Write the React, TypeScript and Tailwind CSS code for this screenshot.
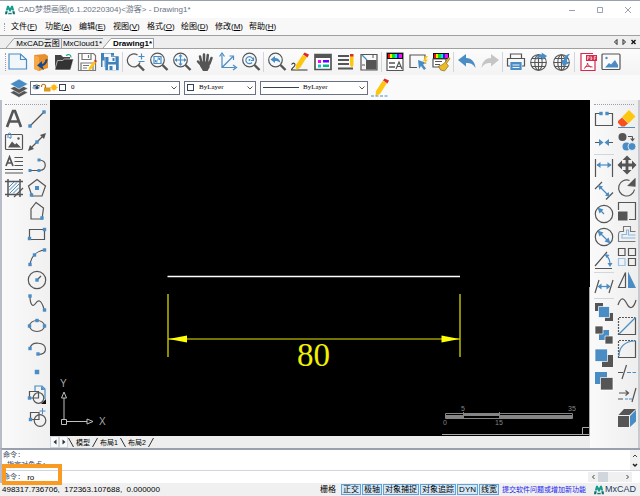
import type { ReactNode } from "react";

const G = "#555555";
const B = "#4a8cc4";

const Icon = ({ children }: { children: ReactNode }) => (
  <svg viewBox="0 0 20 20" className="size-5" fill="none" stroke={G} strokeWidth="1.2">
    {children}
  </svg>
);

const Tool = ({ name, children }: { name: string; children: ReactNode }) => (
  <button type="button" aria-label={name} className="flex size-[23px] shrink-0 items-center justify-center">
    <Icon>{children}</Icon>
  </button>
);

const VSep = () => <span className="mx-px h-5 w-px shrink-0 bg-gray-300" />;
const HSep = () => <span className="my-px h-px w-5 shrink-0 self-center bg-gray-300" />;

const Lens = ({ children }: { children?: ReactNode }) => (
  <>
    <circle cx="8.5" cy="8" r="6.8" fill="#f5f9fc" />
    <path d="M13.5 13l5 5" strokeWidth="2.4" />
    {children}
  </>
);

// small square grip, centred on x/y
const Dot = ({ x, y, s = 3.4 }: { x: number; y: number; s?: number }) => (
  <rect x={x - s / 2} y={y - s / 2} width={s} height={s} fill={B} stroke="none" />
);

const Pencil = () => (
  <g stroke="none">
    <path d="M12.5 3l4.5 2L10 16l-4.5 2 .5-5z" fill="#fdc711" />
    <path d="M13 2.500l1.500-2 4.500 2-1.500 3z" fill="#dc2a2a" />
  </g>
);

const Globe = () => (
  <g strokeWidth="1.1">
    <circle cx="9.5" cy="10.5" r="7.8" />
    <ellipse cx="9.5" cy="10.5" rx="3.7" ry="7.8" />
    <path d="M9.500 2.700v15.600M1.700 10.500h15.600M3 6.500h13M3 14.500h13" />
  </g>
);

const Palette = () => (
  <g stroke="none">
    <path d="M2 1h16v6H2z" fill="#111" />
    <path d="M3 2h2v4H3z" fill="#e11" />
    <path d="M5 2h2v4H5z" fill="#ee0" />
    <path d="M7 2h3v4H7z" fill="#1d1" />
    <path d="M10 2h2v4h-2z" fill="#1de" />
    <path d="M12 2h2v4h-2z" fill="#22e" />
    <path d="M14 2h3v4h-3z" fill="#e1e" />
  </g>
);

const Chevron = () => (
  <svg viewBox="0 0 8 6" className="pointer-events-none mr-px h-1.5 w-2 shrink-0" fill="none" stroke="#555">
    <path d="M1.500 1.500L4 4l2.500-2.500" />
  </svg>
);

const Swatch = () => <span className="size-[7px] shrink-0 border border-gray-700 bg-white" />;

const Logo = ({ className }: { className: string }) => (
  <svg viewBox="0 0 12 12" className={className} fill="#139b8b">
    <path d="M2.500 1h2L6 4l1.500-3h2L11 6.500H8.700L8.300 5 6.500 8h-1L3.700 5l-.4 1.500H1z" />
    <path d="M.5 7.500h2.800L2.500 11H0zM4.500 9l1.500 1 1.500-1 .8 2H3.700zM8.700 7.500h2.800L12 11H9.500z" fill="#0d6f72" />
  </svg>
);

const menus = [
  ["文件", "F"],
  ["功能", "A"],
  ["编辑", "E"],
  ["视图", "V"],
  ["格式", "O"],
  ["绘图", "D"],
  ["修改", "M"],
  ["帮助", "H"],
];

const modes = ["正交", "极轴", "对象捕捉", "对象追踪", "DYN", "线宽"];

const TitleBar = () => (
  <header className="flex h-[18px] items-center border-t border-gray-400 bg-white pr-2 pl-[5px]">
    <Logo className="size-[10px]" />
    <h1 className="ml-[3px] flex-1 text-[8px] leading-none whitespace-nowrap text-gray-500">
      CAD梦想画图(6.1.20220304)&lt;游客&gt; - Drawing1*
    </h1>
    <div className="flex items-center gap-5 text-gray-400">
      <button type="button" aria-label="最小化">
        <svg viewBox="0 0 8 8" className="size-2" stroke="currentColor"><path d="M1 4.500h6" /></svg>
      </button>
      <button type="button" aria-label="最大化">
        <svg viewBox="0 0 8 8" className="size-2" stroke="currentColor" fill="none"><path d="M1.500 1.500h5v5h-5z" /></svg>
      </button>
      <button type="button" aria-label="关闭">
        <svg viewBox="0 0 8 8" className="size-2" stroke="currentColor"><path d="M1 1l6 6M7 1L1 7" /></svg>
      </button>
    </div>
  </header>
);

const MenuBar = () => (
  <nav className="flex h-[17px] items-center bg-[#f8f8f8] pl-1 text-[8px] leading-none">
    <span className="mr-[6px] h-2 border-l border-dotted border-gray-400" />
    <div className="flex gap-[10px]">
      {menus.map(([label, key]) => (
        <button key={key} type="button" className="w-6 shrink-0 text-left whitespace-nowrap">
          {label}(<u>{key}</u>)
        </button>
      ))}
    </div>
  </nav>
);

const Slant = ({ fill }: { fill: string }) => (
  <svg viewBox="0 0 9 10" className="h-[10px] w-[9px] shrink-0" stroke="#9a9a9a">
    <path d="M0 10L8 .5h1V10z" fill={fill} stroke="none" />
    <path d="M0 10L8 .5h1" fill="none" />
  </svg>
);

const DocumentTabs = () => (
  <div className="flex h-[14px] items-end border-y border-[#a0a0a0] bg-[#eeeeee] pl-[6px] text-[8px] leading-none">
    <Slant fill="#f2f2f2" />
    <button type="button" className="h-[10px] w-[47px] border-t border-r border-gray-400 text-center leading-none whitespace-nowrap">MxCAD云图</button>
    <button type="button" className="h-[10px] w-[41px] border-t border-gray-400 text-center leading-none whitespace-nowrap">MxCloud1*</button>
    <Slant fill="#ffffff" />
    <button type="button" className="h-[10px] w-[42px] border-t border-r border-gray-400 bg-white text-center leading-none font-bold whitespace-nowrap">Drawing1*</button>
    <div className="ml-auto flex h-full items-center gap-1 pr-1">
      <button type="button" aria-label="上一个">
        <svg viewBox="0 0 5 6" className="h-[6px] w-[5px]" fill="none" stroke="#222"><path d="M4 .5v5L1.500 3z" /></svg>
      </button>
      <button type="button" aria-label="下一个">
        <svg viewBox="0 0 5 6" className="h-[6px] w-[5px]" fill="none" stroke="#222"><path d="M1 .5v5L3.500 3z" /></svg>
      </button>
      <button type="button" aria-label="关闭标签">
        <svg viewBox="0 0 5 6" className="h-[6px] w-[5px]" stroke="#111" strokeWidth="1.4"><path d="M.5 1l4 4M4.500 1l-4 4" /></svg>
      </button>
    </div>
  </div>
);

const MainToolbar = () => (
  <div className="flex h-[26px] items-center bg-linear-to-b from-[#fcfcfc] to-[#f3f3f3] pl-[5px]">
    <span className="h-[18px] border-l border-dotted border-gray-400" />
    <Tool name="新建">
      <path d="M1 2h11.500L18.500 7.500V17H1z" fill="#f1f6fb" stroke={B} />
      <path d="M12.500 2v5.500h6" stroke={B} />
    </Tool>
    <Tool name="打开云图">
      <path d="M3 3l11-1 3 2v12l-9 3-5-2z" fill="#e98f2c" stroke="none" />
      <path d="M3 3l5 2v14l-5-2z" fill="#f5a94b" stroke="none" />
      <path d="M16.500 7c0 4-2 6.500-5 7l1.500 4-7-4.500L11 9v3c2-.5 3-2 3.500-4.500z" fill="#164a8c" stroke="none" />
    </Tool>
    <Tool name="打开">
      <path d="M1 17V3h6l2 2h7v4" fill="#444" stroke="none" />
      <path d="M1 17L3.500 8.500h5l2-1.500H19.500l-3 11H1z" fill="#333" stroke="#fff" strokeWidth=".6" />
      <path d="M12 3.500c3-2 5-.5 5 2" stroke="#29a38b" />
    </Tool>
    <Tool name="另存为">
      <path d="M1.500 1.500h15l2 2v15h-17z" fill="#fff" stroke="#777" />
      <path d="M5 1.500v6h9v-6M4 18v-7h12v7" stroke="#777" />
      <path d="M6 13.500h6M6 16h4M11.500 3v3" stroke="#777" />
      <path d="M17 9l2 1.500-5 7-2.500 1 .5-3z" fill="#fdc711" stroke="none" />
      <path d="M17 9l1-1.500 2 1.500-1 1.500z" fill="#dc2a2a" stroke="none" />
    </Tool>
    <Tool name="全部保存">
      <path d="M1 1h13v14H1zM5 4h14v14.500H5z" fill="#3f81b8" stroke="none" />
      <path d="M4 1.500h7V5H4zM8.500 5h7v5h-7zM8 12.500h8V18H8zM2.500 8.500h2V15h-2z" fill="#f4f8fc" stroke="none" />
      <path d="M12.500 6h2v3h-2zM9.500 14h3v4h-3z" fill="#3f81b8" stroke="none" />
      <path d="M5 4h14v14.500H5z" stroke="#fff" strokeWidth=".5" />
    </Tool>
    <VSep />
    <Tool name="缩放">
      <path d="M11.500 3A6.500 6.500 0 1 0 14 10.500" />
      <path d="M12.500 13l5.500 5.500" strokeWidth="2.4" />
      <path d="M12.500 4.500h6M15.500 1.500v6M12.500 9.500h6" stroke={B} />
    </Tool>
    <Tool name="窗口缩放">
      <Lens>
        <path d="M5 4.500h7v7H5z" stroke={B} />
        <path d="M6.500 10l4-4M8.500 6h2v2M6.500 8v2h2" stroke={B} strokeWidth="1" />
      </Lens>
    </Tool>
    <Tool name="范围缩放">
      <Lens>
        <path d="M3.500 8h10M8.500 3v10" stroke={B} />
        <path d="M2.500 8L5 6v4zM14.500 8L12 6v4zM8.500 2l-2 2.500h4zM8.500 14l-2-2.500h4z" fill={B} stroke="none" />
      </Lens>
    </Tool>
    <Tool name="平移">
      <path d="M6.500 11L5 4.500M9 10V2.500M12 10.500l.8-7.500M14.500 11.500L16.500 6M7 14L3 9.500" strokeWidth="2.5" strokeLinecap="round" />
      <path d="M5.500 9.500h9.800l-.8 6-2 3.500H8L5 14z" fill={G} stroke="none" />
    </Tool>
    <Tool name="坐标系">
      <path d="M4 2.500v13h13M4 15.500L15 4.500" stroke={B} />
      <path d="M1.500 4.500L4 1l2.500 3.500M15 13l3.500 2.500L15 18M11.500 4h4v4" stroke={B} />
    </Tool>
    <Tool name="实时缩放">
      <Lens>
        <path d="M11.800 7.500A3.500 3.500 0 1 0 11 10.500M10 8.500h2.500V5.500" stroke={B} />
        <circle cx="8.5" cy="8" r="1" fill={B} stroke="none" />
      </Lens>
    </Tool>
    <VSep />
    <Tool name="上一个视图">
      <Lens>
        <path d="M3.500 7.500L8 4v2c3 0 5 1.500 5.500 5C12 9.500 10.500 9 8 9v2z" fill={B} stroke="none" />
      </Lens>
    </Tool>
    <Tool name="画笔">
      <path d="M1.500 12.500c2-2.500 4.500-1 3 1.500-1 1.500-3.500 3-3 4h16" stroke="#333" strokeWidth="1.1" />
      <Pencil />
    </Tool>
    <Tool name="特性">
      <path d="M2 2.500h16v15H2z" fill="#fff" strokeWidth="1.7" />
      <path d="M2 2h16v4H2z" fill={G} stroke="none" />
      <path d="M5 8h3v3H5z" fill="#f0f" stroke="none" />
      <path d="M10 8h6v2.500h-6z" fill="#60f" stroke="none" />
      <path d="M5 12.500h3v3H5z" fill="#0cc" stroke="none" />
      <path d="M10 12.500h6V15h-6z" fill="#0b8" stroke="none" />
    </Tool>
    <Tool name="图层">
      <path d="M2 4h11M2 8h11M2 12h11M2 16.500h15" strokeWidth="1.9" />
      <path d="M14 4h3.500v9L16 16l-2-3z" fill="#fdc711" stroke="none" />
      <path d="M14 2h3.500v2.500H14z" fill="#dc2a2a" stroke="none" />
    </Tool>
    <Tool name="块">
      <path d="M2 2.500h16V18H2z" />
      <path d="M7 8h10.500v9.500H7z" fill={G} stroke="none" />
      <path d="M3 3l5 5" stroke={B} />
      <path d="M14 3v3M3 13h3" strokeWidth="1" />
    </Tool>
    <VSep />
    <Tool name="文字样式">
      <path d="M2 1h16v17.500H2z" fill="#fff" />
      <Palette />
      <path d="M4 11h6M4 15h6" strokeWidth="1.6" />
      <path d="M11 17l3-7 3 7M12 14.500h4" />
    </Tool>
    <Tool name="快速选择">
      <path d="M9 15.500H2V3h15v6" />
      <path d="M10 8l9 3-4 1.500 3 4-2 1.500-3-4-2 3z" fill={B} stroke="none" />
      <path d="M17.500 4L15 9h2l-1.500 4L20 7.500h-2.500L20 4z" fill="#fdc711" stroke="none" />
    </Tool>
    <Tool name="格式刷">
      <Palette />
      <path d="M2 7h13v8H2z" fill="#fff" />
      <path d="M4 9.500h7M4 12.500h5" />
      <path d="M17.500 5.500l1.500 1-3.500 5 2 2.500-4 5-4-1-2-4 3-1 3-2z" fill="#edbb28" stroke="#755d12" strokeWidth=".6" />
    </Tool>
    <VSep />
    <Tool name="撤销">
      <path d="M1 8l8-6v4c6 0 9 4.500 9.500 10C16 12 14 11 9 11v3.500z" fill={B} stroke="none" />
    </Tool>
    <Tool name="重做">
      <path d="M19 8l-8-6v4C5 6 2 10.500 1.500 16 4 12 6 11 11 11v3.500z" fill="#c5c5c5" stroke="none" />
    </Tool>
    <VSep />
    <Tool name="打印">
      <path d="M4.500 6V2h11v4M4 14H1.500V6.500h17V14H16" />
      <path d="M5 10.500h10v7H5z" fill={B} stroke={B} />
      <path d="M6.500 13h7M6.500 15.500h7" stroke="#e8f3fc" strokeWidth="1" />
    </Tool>
    <Tool name="上传">
      <Globe />
      <path d="M7 8c.5-4 3-6 6-5.500L12.500.5 18 4l-4.500 4-.3-2.500C10.500 5 9 6 7 8z" fill={B} stroke="none" />
    </Tool>
    <Tool name="下载">
      <Globe />
      <path d="M18 2c-3 0-6 2.500-6 6l-3-.5 2 6.500 6.500-3-2.500-1.500C15 6 16 4 18 2z" fill={B} stroke="none" />
    </Tool>
    <VSep />
    <Tool name="导出 PDF">
      <path d="M17 9v9.500H3v-17h12" fill="#fff" stroke="#d42a4b" />
      <path d="M8 3h11v6H8z" fill="#d42a4b" stroke="none" />
      <path d="M9.500 8V4.500h1.500v1.700H9.500M13 4.500V8q2-1.700 0-3.500M16.300 8V4.500H18M16.300 6.200h1.500" stroke="#fff" strokeWidth=".6" />
      <path d="M6 16.500c2-1 3.500-3.500 3.500-5.500M9.500 11c.5 2.500 2 4 5 4M7 15c2-1 4-1 6 0" stroke="#d42a4b" strokeWidth="1" />
    </Tool>
    <Tool name="导出图片">
      <rect x="1" y="2" width="18" height="15.5" rx="1" fill="#fafafa" />
      <path d="M4 15.500L8 11l2 1.500L14 8l3 5v2.500z" fill={B} stroke="none" />
      <circle cx="5.5" cy="6" r="1.2" fill={B} stroke="none" />
    </Tool>
  </div>
);

const LayerToolbar = () => (
  <div className="flex h-[25px] items-center bg-[#fafafa] pl-[7px] font-['Liberation_Serif','Noto_Sans_CJK_SC',serif] text-[7px]">
    <Tool name="图层管理">
      <path d="M10 10l9 4.500-9 5-9-5z" fill="#555" stroke="#fff" strokeWidth=".6" />
      <path d="M10 6l9 4.500-9 5-9-5z" fill="#555" stroke="#fff" strokeWidth=".6" />
      <path d="M10 1l9 5-9 5-9-5z" fill={B} stroke="#fff" strokeWidth=".6" />
    </Tool>
    <label className="flex h-[14px] w-[150px] shrink-0 items-center gap-px border border-gray-500 bg-white pl-px">
      <svg viewBox="0 0 26 9" className="h-[9px] w-[26px] shrink-0">
        <path d="M0 5c2-3 5-3 8 0-3 2-5 2-8 0z" fill="#9db4c8" />
        <path d="M1 3q4-2 7 0" stroke="#345" fill="none" />
        <circle cx="5" cy="4.5" r="1.5" fill="#27445f" />
        <path d="M12 4.500h6.500v4H12z" fill="#d99a22" />
        <path d="M9.500 4V2.500q2-2.500 4 0V5" stroke="#b9791a" strokeWidth="1.2" fill="none" />
        <circle cx="22" cy="4.5" r="2.7" fill="#fdb813" />
        <path d="M22 .5v8M18 4.500h8M19.200 1.700l5.600 5.600M24.800 1.700l-5.600 5.600" stroke="#fdb813" strokeWidth=".7" />
      </svg>
      <Swatch />
      <select aria-label="图层" className="min-w-0 flex-1 appearance-none bg-transparent pl-1 leading-none">
        <option>0</option>
      </select>
      <Chevron />
    </label>
    <label className="ml-1 flex h-[14px] w-[72px] shrink-0 items-center border border-gray-500 bg-white pl-[2px]">
      <Swatch />
      <select aria-label="颜色" className="min-w-0 flex-1 appearance-none bg-transparent pl-[5px] leading-none">
        <option>ByLayer</option>
      </select>
      <Chevron />
    </label>
    <label className="ml-1 flex h-[14px] w-[108px] shrink-0 items-center border border-gray-500 bg-white pl-[2px]">
      <span className="h-px w-9 shrink-0 bg-gray-700" />
      <select aria-label="线型" className="min-w-0 flex-1 appearance-none bg-transparent pl-1 leading-none">
        <option>ByLayer</option>
      </select>
      <Chevron />
    </label>
    <Tool name="线型管理">
      <Pencil />
      <path d="M1 18h18" stroke={B} strokeDasharray="3 1.5" />
    </Tool>
  </div>
);

const DrawPanel = () => (
  <aside className="flex w-[50px] shrink-0 flex-col border-l-2 border-[#b9bcc9] bg-linear-to-r from-[#fafafa] to-[#f0f0f0] pt-1">
    <span className="mx-[3px] mb-[2px] border-t border-dotted border-gray-400" />
    <div className="flex">
      <div className="flex flex-col">
        <Tool name="文字">
          <path d="M3 18L9 2h2l6 16M6 12.500h8" strokeWidth="2.6" />
        </Tool>
        <Tool name="图像">
          <rect x="1.500" y="2.500" width="17" height="15" rx="1" />
          <path d="M4 15.500L8 9.500l3 3 1.500-1.500L17 15.500z" fill={G} stroke="none" />
          <circle cx="14.5" cy="6.5" r="1.2" fill={G} stroke="none" />
          <path d="M4 6V2q1.500-2 3 0v4q-1.500 1-1.500-1" stroke={B} strokeWidth="1" />
        </Tool>
        <Tool name="多行文字">
          <path d="M2 11L5.500 2 9 11M3.500 8h4" strokeWidth="1.7" />
          <path d="M10.500 2.500H19M10.500 6.500H19M10.500 10.500H19M1 14.500h18M1 18h18" />
        </Tool>
        <Tool name="填充">
          <path d="M4 1v18M16 1v18M1 3.500h18M1 16.500h18" strokeWidth="1.5" />
          <path d="M5 9l5-5M5 12.500L13 4.500M5.500 15.500L15 6M9 15.500l6-6" stroke={B} strokeWidth="1" />
          <path d="M10 19l9-9" />
        </Tool>
      </div>
      <div className="flex flex-col">
        <Tool name="直线"><path d="M3 17L17 3" /><Dot x={3} y={17} /><Dot x={17} y={3} /></Tool>
        <Tool name="构造线">
          <path d="M3 17L17 3" />
          <path d="M1 19l2-6 4 4zM19 1l-2 6-4-4z" fill={G} stroke="none" />
          <Dot x={10} y={10} />
        </Tool>
        <Tool name="多段线"><path d="M3 15.500h10c7-1 7-9.500 0-10.500" /><Dot x={3} y={15.5} s={3} /><Dot x={12} y={15.5} s={3} /><Dot x={12} y={5} s={3} /></Tool>
        <Tool name="正多边形"><path d="M10 1.500l8.500 6.500L15 18H5L1.500 8z" /><Dot x={10} y={10} s={4} /><Dot x={4.5} y={17} /></Tool>
        <Tool name="多边形"><path d="M9 1.500l7.500 5.500-1.500 11H4V8z" /><Dot x={15} y={17} /></Tool>
        <Tool name="矩形"><path d="M2.500 5.500h15v10h-15z" /><Dot x={2.5} y={14.5} /><Dot x={17.5} y={5.5} /></Tool>
        <Tool name="圆弧"><path d="M3 18C4 10 9 4 17.500 3" /><Dot x={3} y={17.5} /><Dot x={7.5} y={8} /><Dot x={17.5} y={3} /></Tool>
        <Tool name="圆"><circle cx="10" cy="10" r="8.7" /><path d="M10 10l4-4" /><Dot x={10} y={10} /></Tool>
        <Tool name="样条"><path d="M3 3C3 12 6 14.500 8.500 10.500S14 6 17 16" /><Dot x={3} y={3} /><Dot x={17.5} y={17} /></Tool>
        <Tool name="椭圆"><ellipse cx="10" cy="10" rx="7.5" ry="5.5" /><Dot x={2.5} y={10} /><Dot x={17.5} y={10} /><Dot x={10} y={4.5} /></Tool>
        <Tool name="椭圆弧"><path d="M3 9c2-7 15-6 15.500 1 0 4-3 5.500-7.500 5.500" /><Dot x={3} y={9.5} /><Dot x={11} y={15} /></Tool>
        <Tool name="点"><Dot x={10} y={10} s={4.5} /></Tool>
        <Tool name="插入块">
          <path d="M8 6V1h7l3 3v10" stroke={B} />
          <path d="M14 1v4h4z" fill={B} stroke="none" />
          <path d="M2.500 6.500h9v6.500h-9z" /><circle cx="11.5" cy="13" r="5.3" />
          <Dot x={2.5} y={13} /><path d="M19 14v5h-5z" fill="#111" stroke="none" />
        </Tool>
        <Tool name="创建块">
          <path d="M3.500 4.500H12v7H3.500z" /><circle cx="13" cy="12.5" r="5.8" />
          <path d="M12.500 3h6M15.500 0v6" stroke={B} strokeWidth="1" /><Dot x={3.5} y={11.5} />
        </Tool>
      </div>
    </div>
  </aside>
);

const EditPanel = () => (
  <aside className="flex w-[50px] shrink-0 flex-col border-r-2 border-[#c9c9ce] bg-linear-to-r from-[#fafafa] to-[#eeeeee] pt-1">
    <span className="mx-1 mb-[2px] border-t border-dotted border-gray-400" />
    <div className="flex pl-[2px]">
      <div className="flex flex-col">
        <Tool name="打断"><path d="M6 4.500H1.500v12h17v-12H14" /><Dot x={7} y={4.5} /><Dot x={13} y={4.5} /></Tool>
        <Tool name="合并"><path d="M1 10.500h7M19 10.500h-7" /><path d="M5 7l4.500 3.500L5 14zM15 7l-4.500 3.500L15 14z" fill={B} stroke="none" /></Tool>
        <HSep />
        <Tool name="线性标注">
          <path d="M1.500 1v18M18.500 1v18" /><path d="M3 7h14" stroke={B} />
          <path d="M2.500 7l4-3v6zM17.500 7l-4-3v6z" fill={B} stroke="none" />
        </Tool>
        <Tool name="对齐标注">
          <path d="M1 8l7-7M12 18.500l7-7" /><path d="M5 5l10 10" stroke={B} />
          <path d="M4 4l5 1.500L5.500 9zM16 16l-5-1.500 3.500-3.500z" fill={B} stroke="none" />
        </Tool>
        <Tool name="半径标注"><circle cx="10" cy="10" r="8.7" /><path d="M10 10L6 6" stroke={B} /><path d="M3.500 3.500l6 2-4 4z" fill={B} stroke="none" /></Tool>
        <Tool name="直径标注">
          <circle cx="10" cy="10" r="8.7" /><path d="M5 5l10 10" stroke={B} />
          <path d="M3.500 3.500l6 2-4 4zM16.500 16.500l-6-2 4-4z" fill={B} stroke="none" />
        </Tool>
        <Tool name="角度标注">
          <path d="M1 16L13 2M1 18.500h17" /><path d="M12 5c3 3 4 6 4 9" stroke={B} />
          <path d="M10.500 4l5 1-3 3zM16 17l-2.500-4h5z" fill={B} stroke="none" />
        </Tool>
        <HSep />
        <Tool name="倾斜标注">
          <path d="M1 17L5 4M15 17l4-13" /><path d="M5 10.500h11" stroke={B} />
          <path d="M3.500 10.500l4-3v6zM16.500 10.500l-4-3v6z" fill={B} stroke="none" />
        </Tool>
        <HSep />
        <Tool name="前置">
          <g stroke="none"><path d="M1 1h8v8H1zM11 11h8v8h-8z" fill={G} /><path d="M4.500 4.500h11v11h-11z" fill={B} stroke="#fff" strokeWidth=".7" /></g>
        </Tool>
        <Tool name="后置">
          <g stroke="none"><path d="M5 5h10v10H5z" fill={B} /><path d="M1 1h8v8H1zM11 11h8v8h-8z" fill={G} stroke="#fff" strokeWidth=".7" /></g>
        </Tool>
        <Tool name="置于对象之上">
          <g stroke="none"><path d="M8 7h11v12H8z" fill={G} /><path d="M1 1h12.500v12.500H1z" fill={B} stroke="#fff" strokeWidth=".7" /></g>
        </Tool>
        <Tool name="置于对象之下">
          <g stroke="none"><path d="M1 1h12v12H1z" fill={B} /><path d="M6.500 6.500H19V19H6.500z" fill={G} stroke="#fff" strokeWidth=".7" /></g>
        </Tool>
      </div>
      <div className="flex flex-col">
        <Tool name="删除">
          <path d="M12 1l6.500 6.500-7 7L5 8z" fill="#fdc711" stroke="none" />
          <path d="M5 8.500l6 6-3.500 3h-3L1 14v-2z" fill="#f4511e" stroke="none" />
          <path d="M1 18.500h17" stroke={B} strokeWidth="1" />
        </Tool>
        <Tool name="复制">
          <circle cx="5.5" cy="5" r="4" fill={G} stroke="none" />
          <circle cx="9.5" cy="14.5" r="4" fill={B} stroke="none" />
          <circle cx="15" cy="14.5" r="4" fill={B} stroke="#fff" strokeWidth=".8" />
          <path d="M11 4.500h4.500V8" strokeWidth="1" /><path d="M15.500 9.500l-2.500-3h5z" fill={G} stroke="none" />
        </Tool>
        <Tool name="移动">
          <path d="M3 10h14M10 3v14" strokeWidth="2.8" />
          <path d="M.5 10L5 5.500v9zM19.500 10L15 5.500v9zM10 .5L5.500 5h9zM10 19.500L5.500 15h9z" fill={G} stroke="none" />
        </Tool>
        <Tool name="旋转"><path d="M12.500 2.500a8 8 0 1 0 5 9" /><path d="M11.500 7.500L18 1v7z" fill={G} /></Tool>
        <Tool name="缩放对象"><path d="M1.500 9V1.500h17v17H12" /><path d="M1 10.500h9.500v9H1z" fill={G} stroke="none" /></Tool>
        <Tool name="偏移">
          <path d="M18.500 7.500h-5v-5h-7v5h-3q-2 0-2 4v6h17" stroke="#777" strokeWidth="1.1" />
          <path d="M18.500 11h-7V6h-2v4.500H5V14h13.500" stroke="#8cb8df" strokeWidth="1.1" />
        </Tool>
        <Tool name="阵列">
          <path d="M1.500 1.500H8v7H1.500zM11.500 1.500h7v7h-7zM11.500 11.500h7v7h-7z" />
          <path d="M1.500 11.500H8v7H1.500z" stroke="#9ac4e6" />
        </Tool>
        <Tool name="镜像"><path d="M8.500 2.500v15h-7z" /><path d="M11 1.500l8 16.500h-8z" fill={B} stroke="none" /></Tool>
        <Tool name="曲线"><path d="M1 12C4 3 7 5 10 11s7 4 9-4" /></Tool>
        <Tool name="倒角"><path d="M1.500 19V1.500H18" strokeDasharray="2 1" /><path d="M18.500 1.500v17h-17" /><path d="M2 18L18 2" stroke={B} /></Tool>
        <Tool name="圆角"><path d="M1.500 19V1.500H18" strokeDasharray="2 1" /><path d="M18.500 1.500v17h-17" /><path d="M2 17C2 8 8 2 18 2" stroke={B} /></Tool>
        <Tool name="修剪"><path d="M1 10.500h5M5 17L9.500 3" /><path d="M10 10.500h9" stroke={B} strokeDasharray="4 1.5" /></Tool>
        <Tool name="延伸"><path d="M15 17L19 3M2 8h9M8.500 5.500L11.500 8l-3 2.500M1 14h5" /><path d="M8 14h7" stroke={B} strokeDasharray="3 1" /></Tool>
        <Tool name="三维">
          <path d="M1 8h11v11H1z" fill={G} stroke="none" />
          <path d="M1.500 7L7 1h12l-6.500 6z" fill={G} stroke="none" />
          <path d="M13 8l6-6v11.500L13 19z" fill={B} stroke="none" />
        </Tool>
      </div>
    </div>
  </aside>
);

const Drawing = () => (
  <svg viewBox="0 0 540 336" className="block w-full flex-1 bg-black" fill="none" fontFamily="Liberation Sans, sans-serif">
    <path d="M117.500 176.500H410" stroke="#fff" strokeWidth="1.5" />
    <g stroke="#e8e800" strokeWidth="1.2">
      <path d="M118 194v63M410 194v63M118 239h292" />
      <path d="M118.500 239l18.500-3.500v7zM409.500 239l-18-3.500v7z" fill="#ffff00" stroke="none" />
    </g>
    <text x="247" y="266" fontSize="33" fill="#f0f000" fontFamily="Liberation Serif, serif">80</text>

    <g stroke="#c0c0c0">
      <path d="M11.500 319.500h5v5h-5zM14 319v-21M17 321.500h20M11.500 298L14 292l2.500 6zM37 319l6 2.500-6 2.500z" />
    </g>
    <g fontSize="10" fill="#a8a8a8">
      <text x="10" y="287">Y</text>
      <text x="49" y="325">X</text>
    </g>

    <g stroke="#858585">
      <path d="M395.500 313.500h127v5h-127zM413.500 312v7M449.500 312v7" />
      <path d="M396 316.500h17M450 316.500h72" strokeWidth="3" />
      <path d="M414 315h35" strokeWidth="2" />
    </g>
    <g fontSize="7" fill="#858585" textAnchor="middle">
      <text x="413" y="311">5</text>
      <text x="522" y="311">35</text>
      <text x="395" y="325">0</text>
      <text x="449" y="325">15</text>
    </g>

    <path d="M392 334.500h148M539.500 187v149M532.500 327.500h7v7h-7z" stroke="#a8a8a8" />
  </svg>
);

const Slash = ({ flip }: { flip?: boolean }) => (
  <svg viewBox="0 0 6 9" className="h-[9px] w-[6px] shrink-0" stroke="#333">
    <path d={flip ? "M.5 0l5 9" : "M5.500 0l-5 9"} />
  </svg>
);

const LayoutTabs = () => (
  <div className="flex h-[12px] shrink-0 items-center bg-[#eeeeee] text-[7px] leading-none">
    <button type="button" aria-label="向左" className="flex h-full w-[9px] items-center justify-center border border-gray-300 bg-gray-50">
      <svg viewBox="0 0 4 6" className="h-[6px] w-1"><path d="M3.500 .5v5L.5 3z" fill="#333" /></svg>
    </button>
    <button type="button" aria-label="向右" className="flex h-full w-[9px] items-center justify-center border border-gray-300 bg-gray-50">
      <svg viewBox="0 0 4 6" className="h-[6px] w-1"><path d="M.5 .5v5L3.500 3z" fill="#333" /></svg>
    </button>
    <Slash flip />
    <button type="button" className="w-[18px] text-center whitespace-nowrap">模型</button>
    <Slash />
    <button type="button" className="w-[22px] text-center whitespace-nowrap">布局1</button>
    <Slash flip />
    <button type="button" className="w-[22px] text-center whitespace-nowrap">布局2</button>
    <Slash />
  </div>
);

const CommandArea = () => (
  <section className="relative border-t-2 border-l-2 border-gray-400 border-l-[#b9bcc9] bg-white font-['Liberation_Mono','Noto_Sans_CJK_SC',monospace] text-[7px] text-gray-700">
    <div className="flex h-[20px] overflow-hidden">
      <div className="flex-1 pl-px leading-[10px]">
        <p>命令:</p>
        <p className="pl-1">指定对角点:</p>
      </div>
      <div className="flex w-[10px] flex-col justify-between bg-[#f0f0f0]">
        <button type="button" aria-label="向上滚动" className="flex h-[10px] items-center justify-center">
          <svg viewBox="0 0 6 5" className="h-[5px] w-[6px]" fill="none" stroke="#444"><path d="M1 4l2-2 2 2" /></svg>
        </button>
        <button type="button" aria-label="向下滚动" className="flex h-[10px] items-center justify-center">
          <svg viewBox="0 0 6 5" className="h-[5px] w-[6px]" fill="none" stroke="#222" strokeWidth="1.5"><path d="M1 1l2 2 2-2" /></svg>
        </button>
      </div>
    </div>
    <div className="flex h-[13px] items-center border-t border-gray-300 pl-px">
      <label htmlFor="command">命令:</label>
      <input id="command" defaultValue="ro" className="ml-[6px] min-w-0 flex-1 font-['Liberation_Sans',sans-serif] text-[8px] leading-none text-black outline-none" />
      <div className="mr-2 flex h-[10px] w-11 items-center bg-[#f0f0f0]">
        <button type="button" aria-label="向左滚动" className="flex w-[10px] justify-center">
          <svg viewBox="0 0 5 6" className="h-[6px] w-[5px]" fill="none" stroke="#444"><path d="M3.500 1l-2 2 2 2" /></svg>
        </button>
        <span className="h-full w-[10px] bg-gray-300" />
        <button type="button" aria-label="向右滚动" className="ml-auto flex w-[10px] justify-center">
          <svg viewBox="0 0 5 6" className="h-[6px] w-[5px]" fill="none" stroke="#444"><path d="M1.500 1l2 2-2 2" /></svg>
        </button>
      </div>
    </div>
    <div className="pointer-events-none absolute top-[14px] left-0 h-[21px] w-[60px] border-4 border-[#f99b22]" />
  </section>
);

const StatusBar = () => (
  <footer className="flex h-[13px] items-center bg-[#f0f0f0] pr-1 pl-[2px] text-[8px] leading-none whitespace-nowrap">
    <span className="flex-1 whitespace-pre">498317.736706,  172363.107688,  0.000000</span>
    <div className="flex gap-px">
      <button type="button" className="mr-1 leading-none">栅格</button>
      {modes.map((mode) => (
        <button key={mode} type="button" aria-pressed="true" className="h-[11px] border border-[#5ba4dc] bg-[#d6e8f7] px-px leading-none">
          {mode}
        </button>
      ))}
    </div>
    <a href="#" className="ml-[3px] text-[7px] text-[#2222ee]">提交软件问题或增加新功能</a>
    <span className="ml-2 flex items-center gap-px text-[9px] text-[#223a5e]">
      <Logo className="size-[10px]" />
      MxCAD
    </span>
  </footer>
);

export default function App() {
  return (
    <div className="flex min-h-screen flex-col bg-[#f8f8f8] font-['Liberation_Sans','Noto_Sans_CJK_SC',sans-serif] text-black">
      <TitleBar />
      <MenuBar />
      <DocumentTabs />
      <MainToolbar />
      <LayerToolbar />
      <main className="flex flex-1">
        <DrawPanel />
        <div className="flex min-w-0 flex-1 flex-col">
          <Drawing />
          <LayoutTabs />
        </div>
        <EditPanel />
      </main>
      <CommandArea />
      <StatusBar />
    </div>
  );
}
